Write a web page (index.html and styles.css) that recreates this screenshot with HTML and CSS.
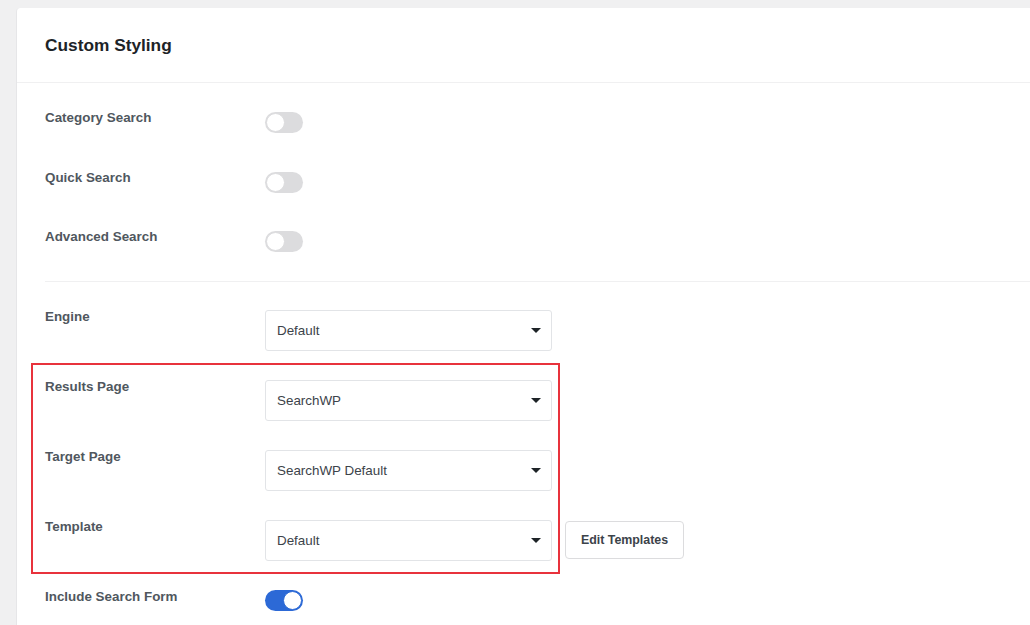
FILE: index.html
```html
<!DOCTYPE html>
<html lang="en">
<head>
  <meta charset="UTF-8" />
  <title>Custom Styling</title>
  <link rel="stylesheet" href="styles.css">
</head>
<body>
<div class="card">
  <div class="card-header">
    <h2>Custom Styling</h2>
  </div>

  <div class="section toggles">
    <div class="row">
      <span class="label">Category Search</span>
      <label class="switch">
        <input type="checkbox">
        <span class="slider"></span>
      </label>
    </div>
    <div class="row">
      <span class="label">Quick Search</span>
      <label class="switch">
        <input type="checkbox">
        <span class="slider"></span>
      </label>
    </div>
    <div class="row">
      <span class="label">Advanced Search</span>
      <label class="switch">
        <input type="checkbox">
        <span class="slider"></span>
      </label>
    </div>
  </div>

  <div class="section selects">
    <div class="row">
      <span class="label">Engine</span>
      <div class="select">
        <span>Default</span>
        <span class="caret"></span>
      </div>
    </div>

    <!-- highlighted group -->
    <div class="highlight">
      <div class="row">
        <span class="label">Results Page</span>
        <div class="select">
          <span>SearchWP</span>
          <span class="caret"></span>
        </div>
      </div>
      <div class="row">
        <span class="label">Target Page</span>
        <div class="select">
          <span>SearchWP Default</span>
          <span class="caret"></span>
        </div>
      </div>
      <div class="row">
        <span class="label">Template</span>
        <div class="select">
          <span>Default</span>
          <span class="caret"></span>
        </div>
        <button class="btn">Edit Templates</button>
      </div>
    </div>

    <div class="row include">
      <span class="label">Include Search Form</span>
      <label class="switch">
        <input type="checkbox" checked>
        <span class="slider"></span>
      </label>
    </div>
  </div>
</div>
</body>
</html>
```

FILE: styles.css
```css
body {
  margin: 0;
  background: #f0f0f1;
  font-family: "Liberation Sans", Arial, sans-serif;
  color: #50575e;
  height: 625px;
  overflow: hidden;
}

.card {
  margin: 8px 0 0 16px;
  background: #fff;
  border-left: 1px solid #e6e6e8;
  border-top-left-radius: 4px;
  min-height: 640px;
}

.card-header {
  height: 74px;
  padding: 0 28px;
  display: flex;
  align-items: center;
  border-bottom: 1px solid #f0f0f1;
}

.card-header h2 {
  margin: 0;
  font-size: 17.3px;
  font-weight: bold;
  color: #1d2327;
}

.section {
  padding: 0 0 0 28px;
}

.toggles {
  padding-top: 29px;
  padding-bottom: 29px;
  display: flex;
  flex-direction: column;
  gap: 38.5px;
}

.selects {
  padding-top: 28px;
  margin-left: 28px;
  padding-left: 0;
  border-top: 1px solid #f0f0f1;
}

.row {
  display: flex;
  align-items: flex-start;
}

.label {
  width: 220px;
  flex-shrink: 0;
  font-size: 13.4px;
  font-weight: bold;
  line-height: 16px;
  margin-top: -2px;
}

.selects .label {
  margin-top: -1px;
}

/* toggle switch */
.switch {
  position: relative;
  display: inline-block;
  width: 38px;
  height: 21px;
}

.switch input {
  opacity: 0;
  width: 0;
  height: 0;
}

.slider {
  position: absolute;
  inset: 0;
  background: #dcdcde;
  border-radius: 11px;
  cursor: pointer;
}

.slider::before {
  content: "";
  position: absolute;
  width: 17px;
  height: 17px;
  left: 1px;
  top: 1px;
  background: #fff;
  border: 1px solid #dcdcde;
  border-radius: 50%;
}

.switch input:checked + .slider {
  background: #2c69d6;
}

.switch input:checked + .slider::before {
  left: 18px;
  border-color: #2c69d6;
}

/* select box */
.select {
  width: 287px;
  height: 41px;
  box-sizing: border-box;
  border: 1px solid #e2e4e7;
  border-radius: 3px;
  padding: 0 10px 0 11px;
  display: flex;
  align-items: center;
  justify-content: space-between;
  font-size: 13.4px;
  color: #3c434a;
  flex-shrink: 0;
}

.caret {
  width: 0;
  height: 0;
  border-left: 5px solid transparent;
  border-right: 5px solid transparent;
  border-top: 5px solid #1d2327;
}

.btn {
  margin: 1px 0 0 13px;
  width: 119px;
  height: 38px;
  background: #fff;
  border: 1px solid #dcdcde;
  border-radius: 4px;
  font-family: "Liberation Sans", Arial, sans-serif;
  font-size: 12.4px;
  font-weight: bold;
  color: #3c434a;
  cursor: pointer;
  flex-shrink: 0;
}

/* red highlight around the page settings */
.highlight {
  margin: 12px 0 0 -14px;
  width: 529px;
  box-sizing: border-box;
  border: 2px solid #e8323c;
  padding: 15px 0 11px 12px;
  display: flex;
  flex-direction: column;
  gap: 29px;
}

.include {
  margin-top: 16px;
}

.include .label {
  margin-top: -1px;
}
```
